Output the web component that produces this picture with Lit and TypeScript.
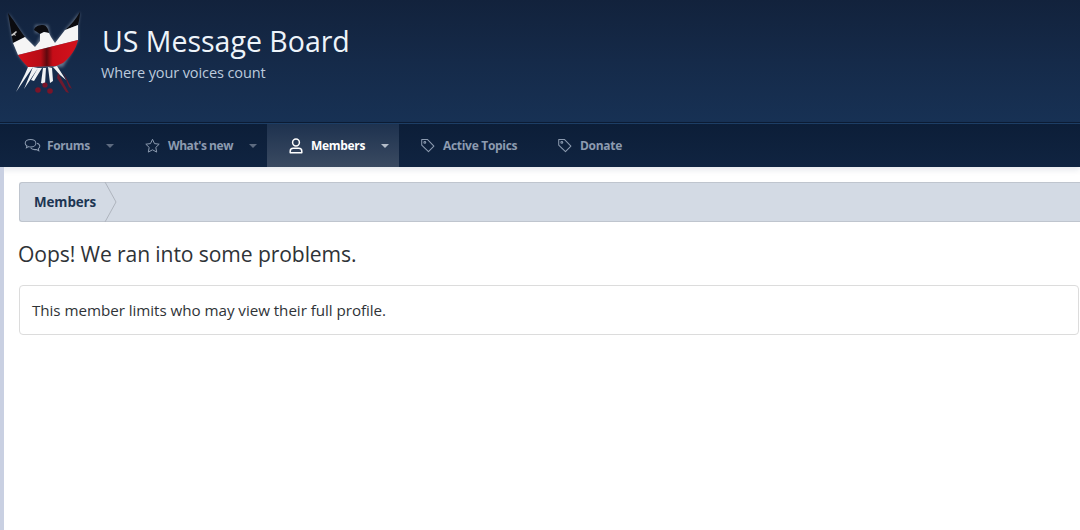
import { LitElement, html, css, svg } from "lit";
import { customElement } from "lit/decorators.js";

const forums = svg`<svg class="ic" viewBox="0 0 18 16" width="17" height="15"><g fill="none" stroke="currentColor" stroke-width="1.1"><path d="M7 1.5c3.200 0 5.600 1.800 5.600 4s-2.400 4-5.600 4c-.8 0-1.500-.1-2.200-.3L2.500 10.500l.5-2.200C1.800 7.600 1.200 6.600 1.200 5.500c0-2.200 2.600-4 5.800-4z"/><path d="M13.800 5.500c1.800.6 3 1.800 3 3.300 0 1-.6 1.900-1.600 2.500l.5 2.200-2.500-1.300c-.6.100-1.100.2-1.700.2-2 0-3.700-.8-4.500-2"/></g></svg>`;
const star = svg`<svg class="ic" viewBox="0 0 16 16" width="17" height="16"><path d="M8 1.300l2 4.300 4.700.6-3.400 3.200.9 4.700L8 11.800l-4.200 2.300.9-4.700L1.300 6.200 6 5.600z" fill="none" stroke="currentColor" stroke-width="1" stroke-linejoin="round"/></svg>`;
const user = svg`<svg class="ic" viewBox="0 0 14 16" width="14" height="16"><g fill="none" stroke="currentColor" stroke-width="1.500"><circle cx="7" cy="4.500" r="3.400"/><path d="M1.200 14.800v-1.500c0-1.800 1.400-3 3-3h5.600c1.600 0 3 1.200 3 3v1.500z" stroke-linejoin="round"/></g></svg>`;
const tag = svg`<svg class="ic" viewBox="0 0 16 16" width="16" height="15"><g fill="none" stroke="currentColor" stroke-width="1.100" stroke-linejoin="round"><path d="M1.300 1.500h6l7 7.200-5.800 5.800-7.200-7z"/><circle cx="4.600" cy="4.700" r="1"/></g></svg>`;

const logo = svg`<svg class="logo" viewBox="0 0 90 95" width="90" height="95" aria-hidden="true">
  <defs>
    <linearGradient id="r" x1="0" x2="1" y1="0" y2="0"><stop offset="0" stop-color="#d0101a"/><stop offset=".38" stop-color="#b80d16"/><stop offset=".48" stop-color="#5e090e"/><stop offset=".58" stop-color="#c50d18"/><stop offset="1" stop-color="#d3121c"/></linearGradient>
    <filter id="g" x="-20%" y="-20%" width="140%" height="140%"><feGaussianBlur stdDeviation="1.500"/></filter>
  </defs>
  <path d="M8 8L13 38 18 50 28 62H63L70 50 78 35V20L80 7 65 25 55 38 50 30 48 20H35V28L42 28 35 42 25 32z" fill="#dfe8f2" opacity=".4" filter="url(#g)"/>
  <path d="M8 8L13 38 25 32C19 24 13 14 8 8z" fill="#0b0b0f"/>
  <path d="M80 7C76 14 71 20 65 25L78 20C79 16 80 11 80 7z" fill="#0b0b0f"/>
  <path d="M34 25C35 21 39 20 43 20 46 20 48 23 49 28L44 27 40 29z" fill="#0b0b0f"/>
  <path d="M13 38L25 32 35 42 40 36 40 29 44 27 49 28 51 32 55 38 65 25 78 20 78 35 18 50z" fill="#f5f5f5"/>
  <path d="M18 50L78 35C76 45 70 52 63 58L56 61 28 62C24 58 20 54 18 50z" fill="url(#r)"/>
  <path d="M28 62L33 62 16 87 25 69zM33 62L38 63 24 84zM38 63L42 63 34 76 31 75zM43 63L46 63 45 79 41 78zM48 62L52 63 53 76 50 78zM53 62L57 61 66 75 60 70z" fill="#f0f2f4"/>
  <path d="M58 68L69 88 66 87 57 73zM63 67L72 84 69 82z" fill="#6e1a2e"/>
  <circle cx="38" cy="85" r="2.800" fill="#7a1428"/><circle cx="45" cy="80" r="2.600" fill="#7a1428"/><circle cx="50" cy="86" r="2.800" fill="#7a1428"/>
  <path d="M11 30l5-4 1 1-2 2 1 2-2-1-2 1z" fill="#c9c9c9"/>
</svg>`;

const items = [
  { label: "Forums", icon: forums, arrow: true },
  { label: "What's new", icon: star, arrow: true },
  { label: "Members", icon: user, arrow: true },
  { label: "Active Topics", icon: tag, arrow: false },
  { label: "Donate", icon: tag, arrow: false },
];

@customElement("app-root")
export class AppRoot extends LitElement {
  static styles = css`
    :host { display: block; width: 1080px; height: 530px; overflow: hidden; background: #fff; font-family: "Open Sans", "Noto Sans", sans-serif; color: #2b2f33; position: relative; }
    .head { height: 123px; box-sizing: border-box; background: linear-gradient(180deg, #12223c 0%, #152a49 50%, #173154 100%); border-bottom: 1px solid #0c1c34; display: flex; align-items: flex-start; }
    .logo { flex: none; margin-top: 5px; }
    .titles { margin: 22px 0 0 12px; }
    .title { font-size: 28.500px; line-height: 38px; color: #eef4fa; white-space: nowrap; }
    .sub { font-size: 14.500px; line-height: 20px; margin-top: 3px; color: #bccadc; letter-spacing: -.1px; white-space: nowrap; margin-left: -1px; }
    .sep { height: 1px; background: #1e3f66; }
    nav { height: 43px; background: linear-gradient(180deg, #0c1e38, #102441); display: flex; padding-left: 8px; box-shadow: 0 3px 6px rgba(20,40,80,.1); position: relative; }
    .tab { display: flex; align-items: center; color: #8c9bb0; font-size: 12px; font-weight: 700; letter-spacing: -.3px; white-space: nowrap; }
    .tab .ic { flex: none; margin-right: 7px; }
    .t0 { width: 119px; padding-left: 16px; box-sizing: border-box; }
    .t0 .ic { margin-right: 6px; }
    .t0 .label { letter-spacing: -.4px; }
    .t1 { width: 140px; padding-left: 17px; box-sizing: border-box; }
    .t1 .label { letter-spacing: -.45px; }
    .t2 { width: 132px; padding-left: 22px; box-sizing: border-box; background: linear-gradient(180deg, #1e324f, #3a4a61); color: #fff; }
    .t2 .ic { margin-right: 8px; }
    .t3 { width: 137px; padding-left: 21px; box-sizing: border-box; }
    .t4 { padding-left: 21px; }
    .label { flex: none; }
    .caret { width: 0; height: 0; border: 4.500px solid transparent; border-bottom: 0; border-top: 4.500px solid #5d6b80; margin-left: 16px; }
    .t2 .caret { border-top-color: #b4bdc9; }
    main { padding: 15px 0 0 19px; position: relative; }
    .strip { position: absolute; left: 0; top: 167px; bottom: 0; width: 3.500px; background: #c9d0e2; }
    .crumb { height: 40px; box-sizing: border-box; background: #d3dae4; border: 1px solid #bfc5ce; border-right: 0; border-radius: 3px 0 0 3px; display: flex; align-items: center; padding-left: 14px; font-size: 13.400px; font-weight: 700; color: #1d3553; position: relative; letter-spacing: -.1px; }
    .chev { position: absolute; left: 84px; top: -1px; width: 14px; height: 40px; }
    h1 { margin: 17px 0 0 -1px; font-size: 21.100px; line-height: 30px; font-weight: 400; color: #2f3337; letter-spacing: -.1px; }
    .box { margin: 16px 1px 0 0; height: 50px; box-sizing: border-box; border: 1px solid #dcdcdc; border-radius: 4px; padding: 0 12px; display: flex; align-items: center; font-size: 15.200px; color: #2f3337; letter-spacing: -.05px; }
  `;
  render() {
    return html`
      <div class="head">
        ${logo}
        <div class="titles">
          <div class="title">US Message Board</div>
          <div class="sub">Where your voices count</div>
        </div>
      </div>
      <div class="sep"></div>
      <nav>
        ${items.map((it, i) => html`<div class="tab t${i}">${it.icon}<span class="label">${it.label}</span>${it.arrow ? html`<span class="caret"></span>` : ""}</div>`)}
      </nav>
      <div class="strip"></div>
      <main>
        <div class="crumb">Members
          <svg class="chev" viewBox="0 0 14 40"><path d="M1 0l11 20L1 40" fill="#d3dae4" stroke="#aeb4bd" stroke-width="1"/></svg>
        </div>
        <h1>Oops! We ran into some problems.</h1>
        <div class="box">This member limits who may view their full profile.</div>
      </main>
    `;
  }
}
